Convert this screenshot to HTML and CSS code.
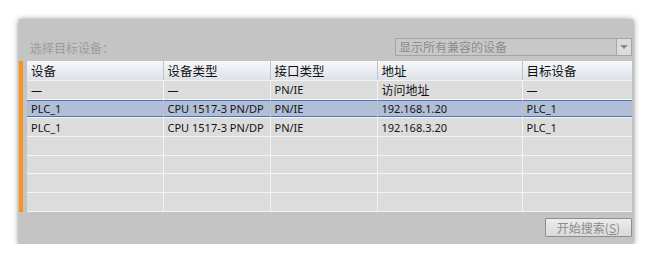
FILE: index.html
```html
<!DOCTYPE html>
<html lang="zh-CN">
<head>
    <meta charset="UTF-8">
    <title>选择目标设备</title>
    <link rel="stylesheet" href="styles.css">
</head>
<body>

<div class="panel">
    <div class="toolbar">
        <span class="label">选择目标设备：</span>
        <div class="select">
            <span class="select-text">显示所有兼容的设备</span>
            <span class="select-arrow"></span>
        </div>
    </div>

    <div class="table-wrap">
        <table class="devices">
            <colgroup>
                <col style="width:136px">
                <col style="width:107px">
                <col style="width:107px">
                <col style="width:145px">
                <col style="width:110px">
            </colgroup>
            <thead>
                <tr><th>设备</th><th>设备类型</th><th>接口类型</th><th>地址</th><th>目标设备</th></tr>
            </thead>
            <tbody>
                <tr><td>—</td><td>—</td><td>PN/IE</td><td class="cjk">访问地址</td><td>—</td></tr>
                <tr class="selected"><td>PLC_1</td><td>CPU 1517-3 PN/DP</td><td>PN/IE</td><td>192.168.1.20</td><td>PLC_1</td></tr>
                <tr><td>PLC_1</td><td>CPU 1517-3 PN/DP</td><td>PN/IE</td><td>192.168.3.20</td><td>PLC_1</td></tr>
                <tr><td></td><td></td><td></td><td></td><td></td></tr>
                <tr><td></td><td></td><td></td><td></td><td></td></tr>
                <tr><td></td><td></td><td></td><td></td><td></td></tr>
                <tr><td></td><td></td><td></td><td></td><td></td></tr>
            </tbody>
        </table>
    </div>

    <div class="actions">
        <button class="search-btn" disabled>开始搜索(<u>S</u>)</button>
    </div>
</div>

</body>
</html>
```

FILE: styles.css
```css
body {
    margin: 0;
    background: #ffffff;
    font-family: "Noto Sans", "Noto Sans CJK SC", sans-serif;
    font-size: 12px;
}
.panel {
    margin: 19px 0 0 19px;
    width: 614px;
    height: 225px;
    background: #c4c4c4;
    box-shadow: 0 1px 6px rgba(0,0,0,0.55);
    display: flex;
    flex-direction: column;
}
.toolbar {
    display: flex;
    align-items: center;
    justify-content: space-between;
    height: 18px;
    margin-top: 19px;
    padding: 0 1px 0 11px;
}
.label {
    color: #9c9c9c;
    font-family: "Noto Sans CJK SC", sans-serif;
}
.select {
    width: 235px;
    height: 16px;
    display: flex;
    border: 1px solid #a4a4a4;
    background: #c8c8c8;
}
.select-text {
    flex: 1;
    padding-left: 3px;
    line-height: 16px;
    color: #8c8c8c;
    font-family: "Noto Sans CJK SC", sans-serif;
    border-right: 1px solid #a8a8a8;
}
.select-arrow {
    width: 14px;
    background: #dcdcdc;
    display: flex;
    align-items: center;
    justify-content: center;
}
.select-arrow::after {
    content: "";
    border-left: 4px solid transparent;
    border-right: 4px solid transparent;
    border-top: 4px solid #8a8a8a;
}
.table-wrap {
    margin-top: 5px;
    border-left: 4px solid #f7941e;
    padding-left: 4px;
    padding-right: 1px;
}
.devices {
    width: 605px;
    border-collapse: collapse;
    table-layout: fixed;
}
.devices th {
    height: 16px;
    padding: 0 0 0 4px;
    text-align: left;
    font-weight: normal;
    font-size: 12.5px;
    color: #101010;
    font-family: "Noto Sans CJK SC", sans-serif;
    background: linear-gradient(#f6f7f9, #dde2e8);
    border-right: 1px solid #c0c4c8;
    border-bottom: 1px solid #f2f2f2;
}
.devices td {
    height: 17.7px;
    padding: 0 0 0 4px;
    background: #dcdcdc;
    color: #141414;
    font-size: 11px;
    border-right: 1px solid #f4f4f4;
    border-bottom: 1px solid #f4f4f4;
    white-space: nowrap;
    overflow: hidden;
}
.devices td.cjk {
    font-family: "Noto Sans CJK SC", sans-serif;
    font-size: 12px;
}
.devices th:last-child,
.devices td:last-child {
    border-right: none;
}
.devices tr.selected td {
    background: #b1bed6;
    border-right-color: #b1bed6;
    box-shadow: inset 0 1px #4d72bd, inset 0 -1px #4d72bd;
}
.actions {
    display: flex;
    justify-content: flex-end;
    padding: 6px 1px 0 0;
}
.search-btn {
    width: 87px;
    height: 19px;
    padding: 0;
    font-family: "Noto Sans CJK SC", sans-serif;
    font-size: 12px;
    color: #8a8a8a;
    background: linear-gradient(#ececec, #d9d9d9);
    border: 1px solid #8e8e8e;
    border-radius: 1px;
}
```
